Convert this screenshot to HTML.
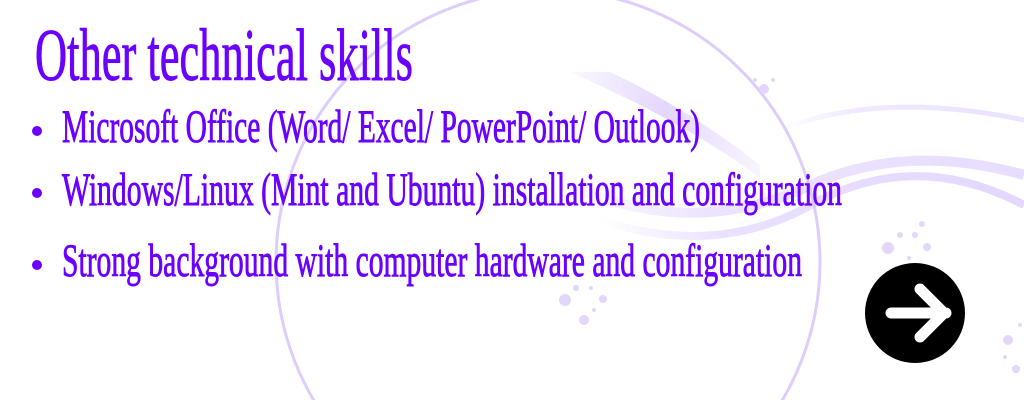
<!DOCTYPE html>
<html><head><meta charset="utf-8"><style>
html,body{margin:0;padding:0;background:#fff;width:1024px;height:400px;overflow:hidden}
svg{display:block}
</style></head><body>
<svg width="1024" height="400" viewBox="0 0 1024 400" xmlns="http://www.w3.org/2000/svg">
<defs>
<linearGradient id="w" x1="0" x2="1"><stop offset="0" stop-color="#d9c8ff" stop-opacity="0"/><stop offset="0.3" stop-color="#d9c8ff" stop-opacity="0.8"/><stop offset="1" stop-color="#cdb8ff" stop-opacity="0.8"/></linearGradient>
<linearGradient id="b" x1="0" x2="1"><stop offset="0" stop-color="#e6dafd" stop-opacity="0.2"/><stop offset="0.5" stop-color="#e0d2fc" stop-opacity="0.9"/><stop offset="1" stop-color="#e6dafd" stop-opacity="0.3"/></linearGradient>
</defs>
<circle cx="548" cy="262" r="272" fill="none" stroke="#dccdfb" stroke-width="3"/>
<path d="M570 72 L610 72 Q690 110 760 165 L760 178 Q690 125 570 72Z" fill="url(#b)"/>
<path d="M560 180 Q680 240 800 190 Q900 140 1024 175" fill="none" stroke="url(#w)" stroke-width="10" opacity="0.6"/>
<path d="M600 220 Q720 260 820 200 Q920 150 1024 205" fill="none" stroke="url(#w)" stroke-width="8" opacity="0.7"/>
<path d="M780 130 Q880 90 1024 120" fill="none" stroke="url(#w)" stroke-width="5" opacity="0.5"/>
<g fill="#e2d6fb">
<circle cx="764" cy="89" r="5"/><circle cx="773" cy="80" r="2"/><circle cx="755" cy="80" r="2"/>
<circle cx="888" cy="248" r="6"/><circle cx="927" cy="247" r="4"/><circle cx="900" cy="235" r="3"/><circle cx="915" cy="235" r="3"/><circle cx="922" cy="224" r="3"/><circle cx="909" cy="258" r="2"/>
<circle cx="565" cy="300" r="6"/><circle cx="584" cy="320" r="5"/><circle cx="603" cy="299" r="4"/><circle cx="576" cy="288" r="3"/><circle cx="591" cy="288" r="2"/><circle cx="594" cy="310" r="2"/>
<circle cx="1008" cy="340" r="5"/><circle cx="1016" cy="369" r="4"/><circle cx="1005" cy="357" r="2"/><circle cx="1020" cy="325" r="2"/>
</g>
<g fill="#6a00ff" stroke="#6a00ff" stroke-width="0.9" font-family="Liberation Serif, serif">
<text x="35" y="80" font-size="74" textLength="378" lengthAdjust="spacingAndGlyphs">Other technical skills</text>
<text x="62" y="142" font-size="47" textLength="638" lengthAdjust="spacingAndGlyphs">Microsoft Office (Word/ Excel/ PowerPoint/ Outlook)</text>
<text x="62" y="205" font-size="47" textLength="780" lengthAdjust="spacingAndGlyphs">Windows/Linux (Mint and Ubuntu) installation and configuration</text>
<text x="62" y="276" font-size="47" textLength="740" lengthAdjust="spacingAndGlyphs">Strong background with computer hardware and configuration</text>
</g>
<g fill="#6a00ff"><circle cx="37" cy="131" r="5"/><circle cx="37" cy="193" r="5"/><circle cx="37" cy="265" r="5"/></g>
<circle cx="915" cy="313" r="50" fill="#000"/>
<path d="M891 313 H946 M920 289 L944 313 L920 337" fill="none" stroke="#fff" stroke-width="11" stroke-linecap="round" stroke-linejoin="round"/>
</svg>
</body></html>
